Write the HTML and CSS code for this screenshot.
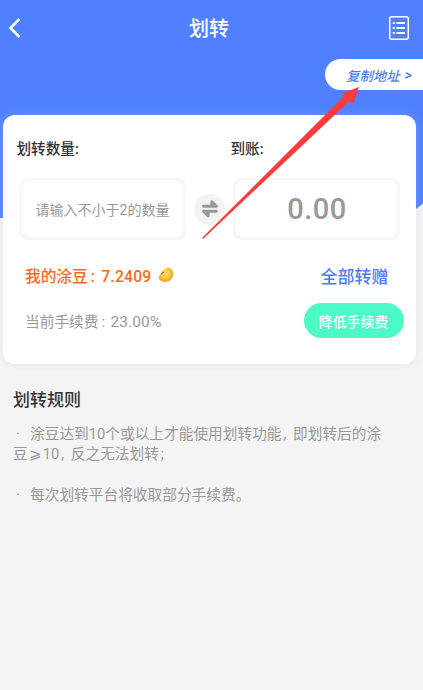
FILE: index.html
```html
<!DOCTYPE html>
<html lang="zh-CN">
<head>
<meta charset="utf-8">
<title>划转</title>
<link rel="stylesheet" href="styles.css">
</head>
<body>
<div class="page">
  <svg class="backdrop" viewBox="0 0 423 220"><path fill="#4f80ff" d="M0 0H423V203.500Q412 213 398 218H0Z"/></svg>
  <header class="nav">
    <svg class="back" width="16" height="24" viewBox="0 0 16 24"><path d="M12.500 3 3.500 12l9 9" fill="none" stroke="#fff" stroke-width="2.500"/></svg>
    <h1>划转</h1>
    <svg class="records" width="20" height="24" viewBox="0 0 20 24" fill="none" stroke="#fff"><rect x=".75" y=".75" width="18.500" height="22.500" rx="2" stroke-width="1.500"/><path d="M7.500 7h8.500M7.500 12h8.500M7.500 17h8.500" stroke-width="1.800"/><path d="M3.800 7h2M3.800 12h2M3.800 17h2" stroke-width="1.800"/></svg>
  </header>
  <div class="copy-row"><a class="copy"><span>复制地址</span><span class="gt">&gt;</span></a></div>
  <main class="card">
    <div class="labels"><span>划转数量:</span><span>到账:</span></div>
    <div class="fields">
      <div class="field hint">请输入不小于2的数量</div>
      <div class="swap"><svg width="18" height="20" viewBox="0 0 18 20" fill="none" stroke="#999" stroke-width="2.900" stroke-linecap="round" stroke-linejoin="round"><path d="M2.500 7.300H15.500L10.800 2.700V7"/><path d="M15.500 12.300H2.500L7.200 17V12.600"/></svg></div>
      <div class="field amount">0.00</div>
    </div>
    <div class="row balance">
      <div class="mine"><span>我的涂豆</span><span class="colon">:</span><span>7.2409</span>
        <svg class="bean" width="16" height="16" viewBox="0 0 16 16"><defs><radialGradient id="bean" cx=".45" cy=".4" r=".62"><stop offset="0" stop-color="#ffe07c"/><stop offset=".55" stop-color="#ffc33c"/><stop offset="1" stop-color="#f59a1c"/></radialGradient></defs><path d="M9 1C12 .2 15.200 2.700 15.200 6.500 15.200 11.500 11.500 15 7 15 3.500 15 .8 13 .8 10.300.8 8.300 2 7.700 2.800 6.200 3.800 4 5.500 1.900 9 1Z" fill="url(#bean)"/><path d="M3.500 7.200Q4.500 5 6.200 5.500" fill="none" stroke="#a87530" stroke-width="1.300"/></svg>
      </div>
      <a class="all">全部转赠</a>
    </div>
    <div class="row fee">
      <div class="rate"><span>当前手续费</span><span class="colon">:</span><span class="percent">23.00%</span></div>
      <button class="lower">降低手续费</button>
    </div>
  </main>
  <section class="rules">
    <h2>划转规则</h2>
    <p><span class="dot">·</span>涂豆达到10个或以上才能使用划转功能<span class="comma">,</span>即划转后的涂<br>豆<span class="gte">⩾</span>10<span class="comma">,</span>反之无法划转<span class="semi">;</span></p>
    <p><span class="dot">·</span>每次划转平台将收取部分手续费。</p>
  </section>
  <svg class="pointer" width="160" height="156" viewBox="200 85 160 156"><path fill="#fc3b3a" d="M359 87 353.500 103.500 349.500 101 203 239 202 238 344.500 95.500 341.500 93.500Z"/></svg>
</div>
</body>
</html>
```
FILE: styles.css
```css
* { box-sizing: border-box; }
body {
  margin: 0;
  background: #f4f4f4;
  font-family: Roboto, "Noto Sans CJK SC", sans-serif;
  color: #333;
}
.page { position: relative; width: 423px; height: 690px; overflow: hidden; }
.backdrop { position: absolute; top: 0; left: 0; width: 423px; height: 220px; }
.nav {
  position: relative;
  display: grid;
  grid-template-columns: 60px 1fr 60px;
  align-items: center;
  height: 56px;
  padding: 0 14px 0 7px;
}
.nav h1 { margin: 0; padding: 2px 0 0 2px; font-size: 20px; line-height: 28px; font-weight: 500; color: #fff; text-align: center; }
.records { justify-self: end; }
.copy-row { position: relative; display: flex; justify-content: flex-end; padding-top: 3px; }
.copy {
  display: flex;
  align-items: center;
  gap: 5px;
  width: 98px;
  height: 31px;
  padding-left: 21px;
  border-radius: 16px 0 0 16px;
  background: #fff;
  color: #4f7cf0;
  font-size: 13.400px;
  font-weight: 500;
  font-style: italic;
  white-space: nowrap;
}
.gt { font-size: 14.500px; padding-top: 1px; }
.card {
  position: relative;
  width: 413px;
  height: 249px;
  margin: 25px 0 0 2.500px;
  border-radius: 12px;
  background: #fff;
  box-shadow: 0 0 8px rgba(190, 200, 220, .3);
}
.labels {
  display: grid;
  grid-template-columns: 214px 1fr;
  padding: 24px 0 0 14px;
  font-size: 14.600px;
  line-height: 20px;
  font-weight: 500;
}
.fields { display: flex; align-items: center; padding: 19px 0 0 16.500px; }
.field {
  display: flex;
  align-items: center;
  justify-content: center;
  width: 167px;
  height: 62px;
  border-radius: 9px;
  background: #fefefe;
  box-shadow: inset 0 0 6px rgba(0, 0, 0, .07);
  color: #999;
}
.hint { font-size: 14px; white-space: nowrap; }
.amount { font-size: 29px; font-weight: 500; letter-spacing: .5px; padding-left: 1px; }
.swap {
  display: flex;
  align-items: center;
  justify-content: center;
  width: 31px;
  height: 31px;
  margin: 0 8px;
  border-radius: 50%;
  background: #f3f3f3;
}
.row { display: flex; align-items: center; justify-content: space-between; }
.balance { height: 30px; margin-top: 20px; padding: 0 27px 0 22.500px; }
.mine { display: flex; align-items: baseline; color: #ff6817; font-size: 15.700px; font-weight: 500; }
.colon { width: 13.500px; padding-left: 3px; }
.bean { align-self: center; margin-left: 6.500px; }
.mine span:nth-child(3) { letter-spacing: .2px; }
.all { color: #4f7cf0; font-size: 17px; font-weight: 500; }
.fee { height: 35px; margin-top: 13px; padding: 0 12px 0 22.500px; }
.rate { display: flex; align-items: baseline; font-size: 14.700px; color: #999; }
.rate .colon { width: 12px; }
.percent { font-size: 15.500px; letter-spacing: .1px; }
.lower {
  width: 100px;
  height: 35px;
  border: 0;
  border-radius: 18px;
  padding: 0;
  background: #4df9c7;
  color: #fff;
  font-family: inherit;
  font-size: 13.900px;
  font-weight: 500;
}
.rules { position: relative; padding: 24px 0 0 13px; color: #999; }
.rules h2 { margin: 0 0 12px; font-size: 17px; line-height: 24px; font-weight: 500; color: #333; }
.rules p { margin: 0 0 20px; font-size: 14.700px; line-height: 20.400px; white-space: nowrap; }
.dot, .comma, .gte, .semi { display: inline-block; }
.dot { width: 17px; padding-left: 3px; }
.comma { width: 11.500px; padding-left: 2px; }
.gte { width: 15px; text-align: center; }
.semi { padding-left: 2px; }
.pointer { position: absolute; left: 200px; top: 85px; }
```
